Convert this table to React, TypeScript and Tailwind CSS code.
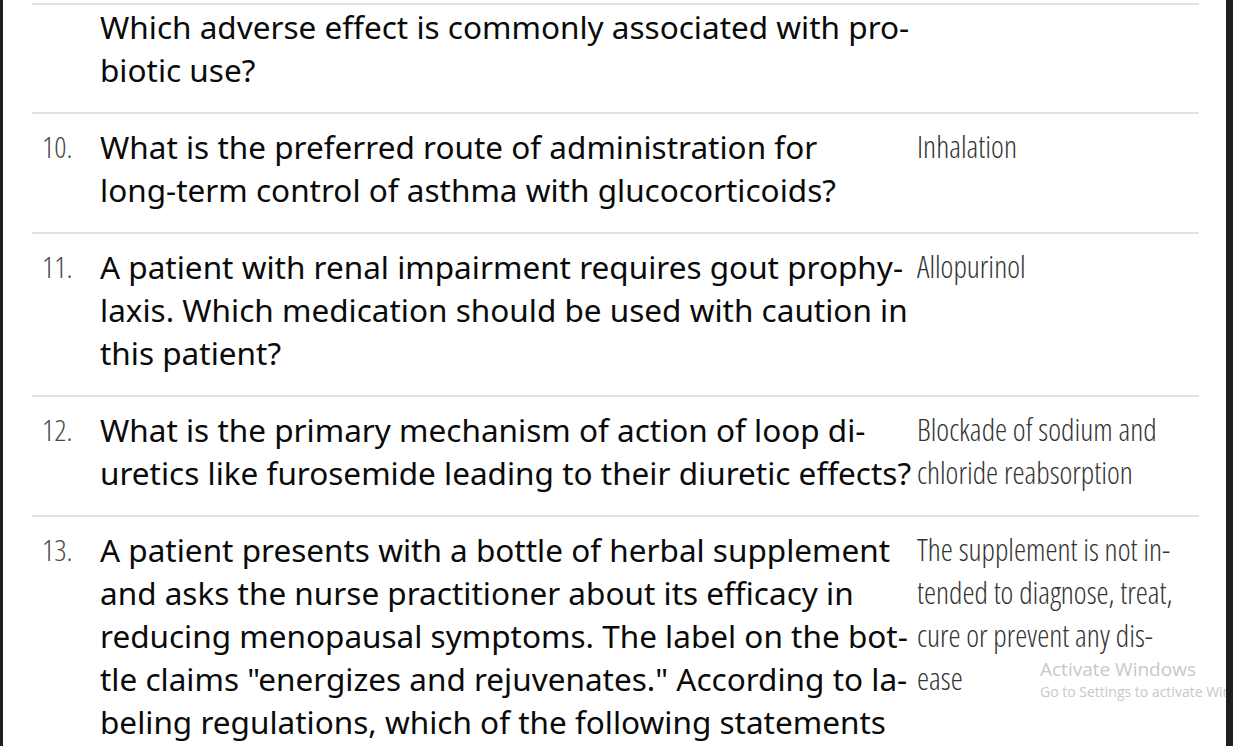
import React from 'react'

interface Row {
  num?: string
  question: string[]
  answer: string[]
  first?: boolean
}

const rows: Row[] = [
  {
    question: ['Which adverse effect is commonly associated with pro-', 'biotic use?'],
    answer: [],
    first: true,
  },
  {
    num: '10.',
    question: [
      'What is the preferred route of administration for',
      'long-term control of asthma with glucocorticoids?',
    ],
    answer: ['Inhalation'],
  },
  {
    num: '11.',
    question: [
      'A patient with renal impairment requires gout prophy-',
      'laxis. Which medication should be used with caution in',
      'this patient?',
    ],
    answer: ['Allopurinol'],
  },
  {
    num: '12.',
    question: [
      'What is the primary mechanism of action of loop di-',
      'uretics like furosemide leading to their diuretic effects?',
    ],
    answer: ['Blockade of sodium and', 'chloride reabsorption'],
  },
  {
    num: '13.',
    question: [
      'A patient presents with a bottle of herbal supplement',
      'and asks the nurse practitioner about its efficacy in',
      'reducing menopausal symptoms. The label on the bot-',
      'tle claims "energizes and rejuvenates." According to la-',
      'beling regulations, which of the following statements',
    ],
    answer: ['The supplement is not in-', 'tended to diagnose, treat,', 'cure or prevent any dis-', 'ease'],
  },
]

function QuestionRow({ row }: { row: Row }) {
  return (
    <div
      className={`flex border-t-2 border-[#dfe2ec] pb-[21px] ${row.first ? 'pt-0' : 'pt-[11px]'}`}
    >
      <div className="w-[68px] shrink-0 pl-[10px] font-['Open_Sans',sans-serif] text-[30px] font-light text-[#4a4a4a] [font-stretch:75%]">
        {row.num}
      </div>
      <div className="w-[817px] shrink-0 font-['Noto_Sans',sans-serif] text-[31.5px] text-[#0a0a0a] whitespace-nowrap">
        {row.question.map((line, i) => (
          <div key={i}>{line}</div>
        ))}
      </div>
      <div className="flex-1 font-['Open_Sans',sans-serif] text-[30.6px] font-light text-[#333] whitespace-nowrap [font-stretch:75%]">
        {row.answer.map((line, i) => (
          <div key={i}>{line}</div>
        ))}
      </div>
    </div>
  )
}

export default function App() {
  return (
    <div className="relative flex h-[746px] w-[1233px] overflow-hidden bg-white">
      <div className="w-[3px] shrink-0 bg-[#1f1f1f]" />
      <div className="flex-1 pl-[29px] pr-[27px] pt-[3px] leading-[43px]">
        {rows.map((row, i) => (
          <QuestionRow key={i} row={row} />
        ))}
      </div>
      <div className="absolute left-[1040px] top-[657px] font-['Open_Sans',sans-serif] text-[#c8c8c8] whitespace-nowrap">
        <div className="text-[19px] leading-[25px]">Activate Windows</div>
        <div className="text-[14px] leading-[20px]">Go to Settings to activate Windows.</div>
      </div>
      <div className="relative w-[7px] shrink-0 bg-[#1f1f1f]" />
    </div>
  )
}
